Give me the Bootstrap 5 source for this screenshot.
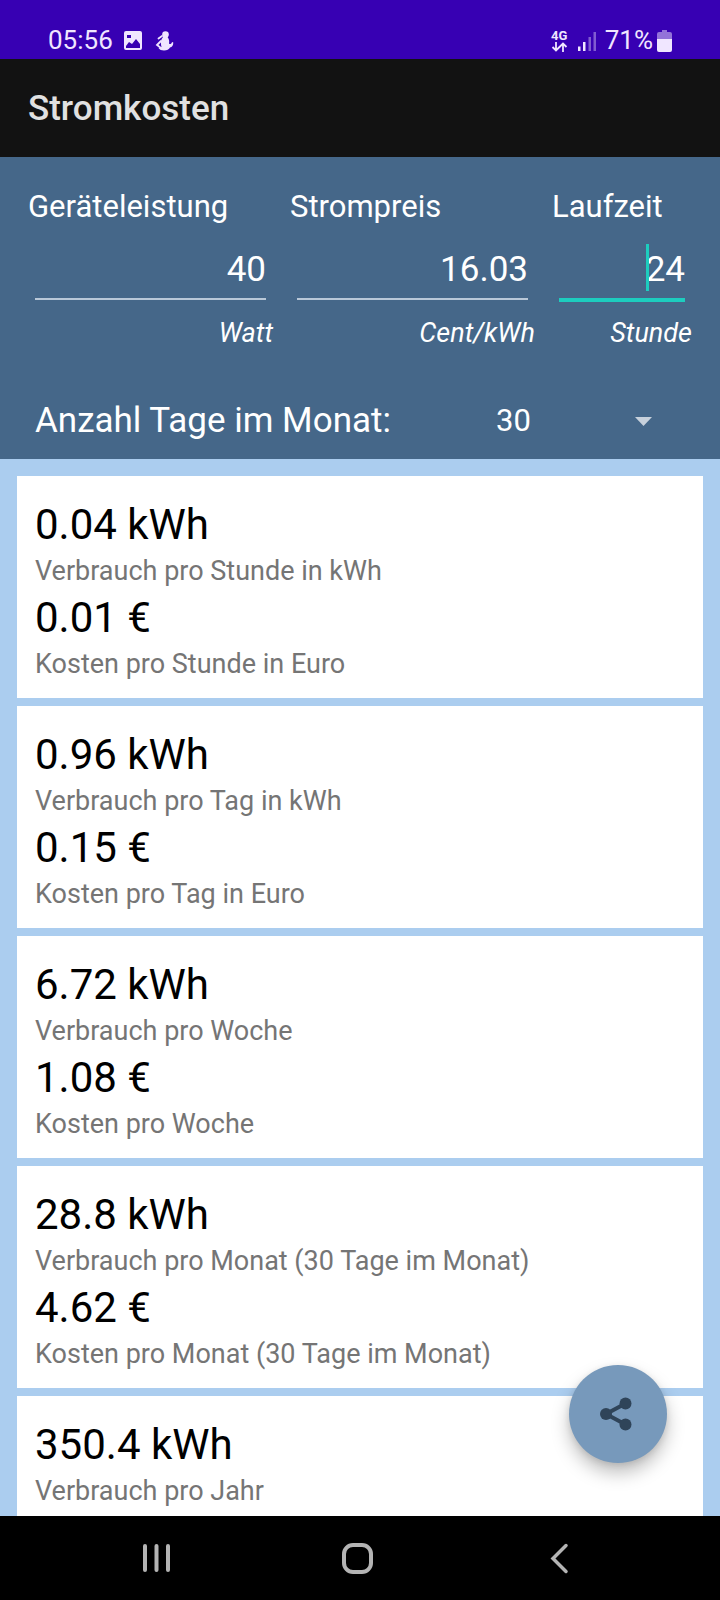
<!DOCTYPE html>
<html lang="de">
<head>
<meta charset="utf-8">
<meta name="viewport" content="width=device-width, initial-scale=1">
<title>Stromkosten</title>
<link href="https://cdn.jsdelivr.net/npm/bootstrap@5.3.0/dist/css/bootstrap.min.css" rel="stylesheet">
<style>
  body { font-family: Roboto, "Noto Sans", sans-serif; background: #abcdef; }
  .status-bar { background: #3700b3; color: #f0e6ff; padding: 22px 48px 0; font-size: 26px; line-height: 37px; }
  .net-type { font-size: 13px; line-height: 12px; font-weight: 700; }
  .app-bar { background: #121212; padding: 2px 28px 0; }
  .app-bar h1 { color: #e1e1e1; font-size: 35px; line-height: 96px; font-weight: 500; }
  .input-panel { background: #456789; padding: 30px 28px 14px; }
  .field-grid { display: grid; grid-template-columns: 7fr 7fr 4fr; column-gap: 17px; }
  .field-label { font-size: 31px; line-height: 40px; margin-bottom: 13px; }
  .field-box { height: 64px; margin: 0 7px; }
  .field-input { display: block; width: 100%; height: 60px; padding: 0; border: 0; border-bottom: 2px solid #b9c8d8; border-radius: 0; background: transparent; color: #fff; font-size: 35px; text-align: right; outline: 0; }
  .field-input.is-active { height: 62px; border-bottom: 4px solid #1dcdbf; }
  .text-caret { right: 36px; top: 4px; width: 3px; height: 47px; background: #1dcdbf; }
  .field-unit { font-size: 27px; line-height: 32px; margin-top: 13px; }
  .days-row { margin-top: 48px; padding-left: 7px; line-height: 48px; }
  .days-row label { font-size: 35px; }
  .days-box { width: 196px; }
  .days-select { appearance: none; width: 100%; height: 48px; padding: 0; border: 0; background: transparent; color: #fff; font-size: 31px; }
  .days-arrow { right: 40px; top: 20px; }
  .result-list { padding: 17px 17px 0; gap: 8px; }
  .result-card { border: 0; border-radius: 0; padding: 22px 18px 14px; }
  .result-card dt { font-size: 42px; line-height: 54px; font-weight: 400; color: #000; }
  .result-card dd { font-size: 27px; line-height: 39px; margin: 0; color: #757575; }
  .share-btn { right: 53px; bottom: 53px; width: 98px; height: 98px; padding: 0; border: 0; background: #7799bb; box-shadow: 0 10px 18px rgba(0,0,0,.25), 0 2px 6px rgba(0,0,0,.1); }
  .nav-keys { background: #000; height: 84px; padding: 0 59px 0 55px; }
  .nav-keys button { flex: 1; border: 0; padding: 0; background: transparent; }
</style>
</head>
<body>
<div class="d-flex flex-column vh-100 overflow-hidden">
  <div class="status-bar d-flex align-items-center justify-content-between flex-shrink-0">
    <div class="d-flex align-items-center">
      <span>05:56</span>
      <svg class="ms-2" width="34" height="20" viewBox="0 0 34 20" aria-hidden="true">
        <path fill="#f0e6ff" fill-rule="evenodd" d="M5 0h14a2 2 0 0 1 2 2v15a2 2 0 0 1-2 2H5a2 2 0 0 1-2-2V2a2 2 0 0 1 2-2zm0 15v2h14v-4l-4-5-4 5-3-2zM6 4v3h4V4z"/>
      </svg>
      <svg width="20" height="20" viewBox="0 0 20 20" aria-hidden="true">
        <circle cx="10.500" cy="3.500" r="3.300" fill="#f0e6ff"/>
        <path d="M7 5 3.500 7.500M6 10l-4 4 4 3" fill="none" stroke="#f0e6ff" stroke-width="1.800" stroke-linecap="round"/>
        <path fill="#f0e6ff" d="M8 6h4.500c1.500 2 2 4 1.500 6.500 1 1.200 2.500.5 3-1.500l1.300.5c0 3-1.300 4.500-3.300 5-1 2-3 3-6 3-2.500 0-4.500-.8-5.500-2.500l3-1c-.8-4-1-7 1.500-10z"/>
      </svg>
    </div>
    <div class="d-flex align-items-center">
      <div class="net-type d-flex flex-column align-items-center me-2">
        <span>4G</span>
        <svg width="17" height="10" viewBox="0 0 17 10" fill="none" stroke="#f0e6ff" stroke-width="1.800" aria-hidden="true"><path d="M5 0v8.500M1.500 5 5 8.500 8.500 5M12 10V1.500M8.500 5 12 1.500 15.500 5"/></svg>
      </div>
      <svg class="me-2" width="21" height="20" viewBox="0 0 21 20" fill="#f0e6ff" aria-hidden="true">
        <path d="M2 15.500h2.500V20H2zM7 11h2.500v9H7z"/><path opacity=".4" d="M12.500 6H15v14h-2.500zM17.500 1H20v19h-2.500z"/>
      </svg>
      <span>71%</span>
      <svg class="ms-1" width="15" height="22" viewBox="0 0 15 22" fill="#f0e6ff" aria-hidden="true">
        <path opacity=".5" d="M5 0h5v2h3a2 2 0 0 1 2 2v5H0V4a2 2 0 0 1 2-2h3z"/><path d="M0 9h15v11a2 2 0 0 1-2 2H2a2 2 0 0 1-2-2z"/>
      </svg>
    </div>
  </div>

  <header class="app-bar flex-shrink-0"><h1 class="m-0">Stromkosten</h1></header>

  <form class="input-panel text-white flex-shrink-0">
    <div class="field-grid">
      <div>
        <label class="field-label d-block" for="power">Geräteleistung</label>
        <div class="field-box"><input class="field-input" id="power" type="text" inputmode="decimal" value="40"></div>
        <div class="field-unit fst-italic text-end">Watt</div>
      </div>
      <div>
        <label class="field-label d-block" for="price">Strompreis</label>
        <div class="field-box"><input class="field-input" id="price" type="text" inputmode="decimal" value="16.03"></div>
        <div class="field-unit fst-italic text-end">Cent/kWh</div>
      </div>
      <div>
        <label class="field-label d-block" for="runtime">Laufzeit</label>
        <div class="field-box position-relative">
          <input class="field-input is-active" id="runtime" type="text" inputmode="decimal" value="24">
          <span class="text-caret position-absolute"></span>
        </div>
        <div class="field-unit fst-italic text-end">Stunde</div>
      </div>
    </div>
    <div class="days-row d-flex justify-content-between">
      <label for="days">Anzahl Tage im Monat:</label>
      <div class="days-box position-relative">
        <select class="days-select d-block" id="days"><option>28</option><option>29</option><option selected>30</option><option>31</option></select>
        <svg class="days-arrow position-absolute pe-none" width="17" height="9" viewBox="0 0 17 9" aria-hidden="true"><path fill="#c7d1dc" d="M0 0h17L8.500 9z"/></svg>
      </div>
    </div>
  </form>

  <div class="position-relative flex-grow-1 overflow-hidden">
    <main class="result-list d-flex flex-column">
      <dl class="result-card card m-0">
        <dt>0.04 kWh</dt><dd>Verbrauch pro Stunde in kWh</dd>
        <dt>0.01 €</dt><dd>Kosten pro Stunde in Euro</dd>
      </dl>
      <dl class="result-card card m-0">
        <dt>0.96 kWh</dt><dd>Verbrauch pro Tag in kWh</dd>
        <dt>0.15 €</dt><dd>Kosten pro Tag in Euro</dd>
      </dl>
      <dl class="result-card card m-0">
        <dt>6.72 kWh</dt><dd>Verbrauch pro Woche</dd>
        <dt>1.08 €</dt><dd>Kosten pro Woche</dd>
      </dl>
      <dl class="result-card card m-0">
        <dt>28.8 kWh</dt><dd>Verbrauch pro Monat (30 Tage im Monat)</dd>
        <dt>4.62 €</dt><dd>Kosten pro Monat (30 Tage im Monat)</dd>
      </dl>
      <dl class="result-card card m-0 pb-5">
        <dt>350.4 kWh</dt><dd>Verbrauch pro Jahr</dd>
      </dl>
    </main>
    <button class="share-btn btn rounded-circle position-absolute" type="button" aria-label="Teilen">
      <svg class="d-block" width="98" height="98" viewBox="0 0 98 98" fill="#2f4459" aria-hidden="true">
        <path d="M56.500 38.500 37 49l19.500 10.500" fill="none" stroke="#2f4459" stroke-width="4"/>
        <circle cx="37" cy="49" r="6"/><circle cx="56.500" cy="38.500" r="6"/><circle cx="56.500" cy="59.500" r="6"/>
      </svg>
    </button>
  </div>

  <nav class="nav-keys d-flex align-items-center flex-shrink-0" aria-label="Systemtasten">
    <button type="button" aria-label="Letzte Apps"><svg width="32" height="32" viewBox="0 0 32 32" fill="none" stroke="#b4b4b4" stroke-width="4" stroke-linecap="round"><path d="M5 4v24M16.500 4v24M28 4v24"/></svg></button>
    <button type="button" aria-label="Startseite"><svg width="32" height="32" viewBox="0 0 32 32" fill="none" stroke="#b4b4b4" stroke-width="4"><rect x="2" y="3" width="27" height="27" rx="9"/></svg></button>
    <button type="button" aria-label="Zurück"><svg width="32" height="32" viewBox="0 0 32 32" fill="none" stroke="#b4b4b4" stroke-width="3.500" stroke-linecap="round"><path d="M22 3.500 9 16.500l13 13"/></svg></button>
  </nav>
</div>
<script src="https://cdn.jsdelivr.net/npm/bootstrap@5.3.0/dist/js/bootstrap.bundle.min.js"></script>
</body>
</html>
